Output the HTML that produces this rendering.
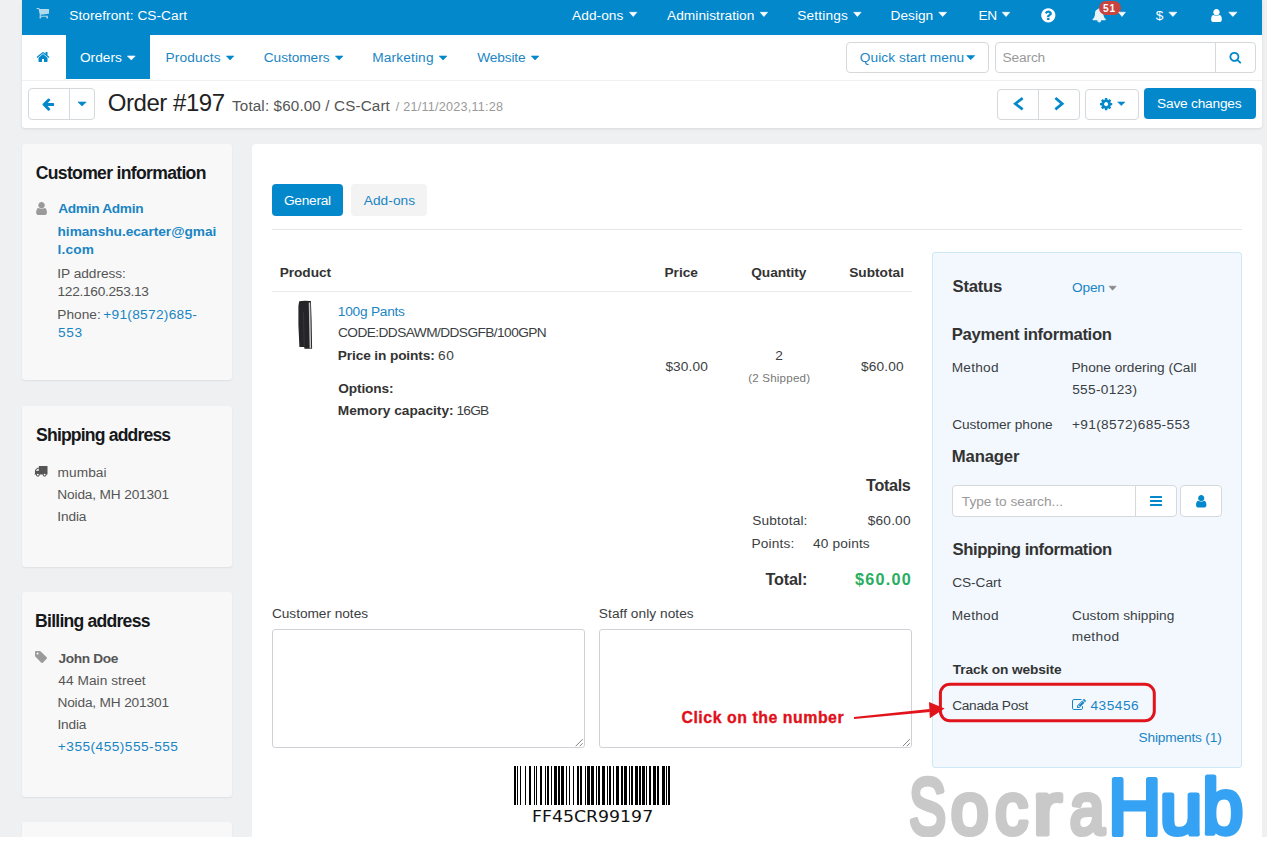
<!DOCTYPE html>
<html lang="en">
<head>
<meta charset="utf-8">
<title>Order #197 - CS-Cart Administration panel</title>
<style>
*{box-sizing:border-box}
html,body{margin:0;padding:0}
body{width:1267px;height:842px;overflow:hidden;background:#eef0f2;position:relative;font-family:'Liberation Sans',sans-serif;font-size:13.7px;color:#3b3e42}
.abs{position:absolute}
.t{position:absolute;white-space:pre;line-height:20px}
svg{position:absolute;overflow:visible}
#header{left:22px;top:0;width:1240px;height:128px;background:#fff;border-radius:0 0 3px 3px;box-shadow:0 1px 3px rgba(0,0,0,.10)}
#top{left:0;top:0;width:1240px;height:35px;background:#0388cc}
#nav{left:0;top:35px;width:1240px;height:46px;border-bottom:1px solid #eef0f1}
#act{left:0;top:81px;width:1240px;height:47px}
.card{background:#f8f8f8;border-radius:3px;box-shadow:0 1px 2px rgba(0,0,0,.07)}
#main{left:252px;top:144px;width:1010px;height:693px;background:#fff;border-radius:4px 4px 0 0}
#rp{left:932px;top:252px;width:310px;height:516px;background:#f2f8fe;border:1px solid #cfe8f5;border-radius:3px}
.btn{position:absolute;background:#fff;border:1px solid #d6d9dc;border-radius:4px}
.caret{position:absolute;width:0;height:0;border-left:4px solid transparent;border-right:4px solid transparent;border-top:4px solid #fff}
#bottomstrip{left:0;top:837px;width:1267px;height:5px;background:#fff}
</style>
</head>
<body>
<div id="header" class="abs">
  <div id="top" class="abs">
    <svg style="left:13.88px;top:6.30px" width="13.54" height="13.54" viewBox="0 0 1792 1792"><path fill="#b0d8ef" d="M704 1536q0 52-38 90t-90 38-90-38-38-90 38-90 90-38 90 38 38 90zm896 0q0 52-38 90t-90 38-90-38-38-90 38-90 90-38 90 38 38 90zm128-1088v512q0 24-16.500 42.500t-40.500 21.500l-1044 122q13 60 13 70 0 16-24 64h920q26 0 45 19t19 45-19 45-45 19h-1024q-26 0-45-19t-19-45q0-11 8-31.500t16-36 21.500-40 15.500-29.500l-177-823h-204q-26 0-45-19t-19-45 19-45 45-19h256q16 0 28.500 6.500t19.500 15.500 13 24.500 8 26 5.500 29.500 4.500 26h1201q26 0 45 19t19 45z"/></svg>
    <svg style="left:0;top:0" width="1" height="1"><polygon points="607.50,12.30 614.90,12.30 611.20,16.60" fill="#fff" stroke="#fff" stroke-width="0.6" stroke-linejoin="round"/></svg>
    <svg style="left:0;top:0" width="1" height="1"><polygon points="738.20,12.30 745.60,12.30 741.90,16.60" fill="#fff" stroke="#fff" stroke-width="0.6" stroke-linejoin="round"/></svg>
    <svg style="left:0;top:0" width="1" height="1"><polygon points="831.70,12.30 839.10,12.30 835.40,16.60" fill="#fff" stroke="#fff" stroke-width="0.6" stroke-linejoin="round"/></svg>
    <svg style="left:0;top:0" width="1" height="1"><polygon points="916.80,12.30 924.60,12.30 920.70,16.60" fill="#fff" stroke="#fff" stroke-width="0.6" stroke-linejoin="round"/></svg>
    <svg style="left:0;top:0" width="1" height="1"><polygon points="980.20,12.30 987.80,12.30 984.00,16.60" fill="#fff" stroke="#fff" stroke-width="0.6" stroke-linejoin="round"/></svg>
    <svg style="left:1018.36px;top:6.96px" width="16.59" height="16.59" viewBox="0 0 1792 1792"><path fill="#fff" d="M1024 1376v-192q0-14-9-23t-23-9h-192q-14 0-23 9t-9 23v192q0 14 9 23t23 9h192q14 0 23-9t9-23zm256-672q0-88-55.500-163t-138.500-116-170-41q-243 0-371 213-15 24 8 42l132 100q7 6 19 6 16 0 25-12 53-68 86-92 34-24 86-24 48 0 85.500 26t37.500 59q0 38-20 61t-68 45q-63 28-115.500 86.500t-52.500 125.500v36q0 14 9 23t23 9h192q14 0 23-9t9-23q0-19 21.500-49.500t54.500-49.500q32-18 49-28.500t46-35 44.500-48 28-60.500 12.500-81zm384 192q0 209-103 385.500t-279.500 279.500-385.500 103-385.500-103-279.500-279.500-103-385.500 103-385.500 279.500-279.500 385.500-103 385.500 103 279.500 279.500 103 385.500z"/></svg>
    <svg style="left:1070.45px;top:8.25px" width="14.39" height="14.39" viewBox="0 0 1792 1792"><path fill="#e6f3fa" d="M912 1696q0-16-16-16-59 0-101.500-42.500t-42.500-101.500q0-16-16-16t-16 16q0 73 51.500 124.500t124.500 51.500q16 0 16-16zm816-288q0 52-38 90t-90 38h-448q0 106-75 181t-181 75-181-75-75-181h-448q-52 0-90-38t-38-90q50-42 91-88t85-119.500 74.500-158.500 50-206 19.500-260q0-152 117-282.500t307-158.500q-8-19-8-39 0-40 28-68t68-28 68 28 28 68q0 20-8 39 190 28 307 158.500t117 282.500q0 139 19.500 260t50 206 74.500 158.500 85 119.500 91 88z"/></svg>
    <span class="abs" style="left:1076.6px;top:0.5px;width:22px;height:14.8px;border-radius:7.4px;background:#c9443f"></span>
    <svg style="left:0;top:0" width="1" height="1"><polygon points="1096.60,12.20 1103.40,12.20 1100.00,16.50" fill="#fff" stroke="#fff" stroke-width="0.6" stroke-linejoin="round"/></svg>
    <svg style="left:0;top:0" width="1" height="1"><polygon points="1146.90,12.20 1154.90,12.20 1150.90,16.50" fill="#fff" stroke="#fff" stroke-width="0.6" stroke-linejoin="round"/></svg>
    <svg style="left:1186.77px;top:7.50px" width="14.96" height="14.96" viewBox="0 0 1792 1792"><path fill="#fff" d="M1536 1399q0 109-62.500 187t-150.500 78h-854q-88 0-150.500-78t-62.500-187q0-85 8.500-160.500t31.500-152 58.500-131 94-89 134.500-34.500q131 128 313 128t313-128q76 0 134.500 34.500t94 89 58.500 131 31.500 152 8.500 160.500zm-256-887q0 159-112.500 271.500t-271.500 112.500-271.500-112.500-112.500-271.500 112.500-271.500 271.500-112.500 271.500 112.500 112.500 271.500z"/></svg>
    <svg style="left:0;top:0" width="1" height="1"><polygon points="1206.80,12.20 1215.00,12.20 1210.90,16.50" fill="#fff" stroke="#fff" stroke-width="0.6" stroke-linejoin="round"/></svg>
    <span class="t" style="left:47.37px;top:6.00px;font-size:13.7px;color:#fff;letter-spacing:0.03px;">Storefront: CS-Cart</span>
    <span class="t" style="left:550.10px;top:6.00px;font-size:13.7px;color:#fff;letter-spacing:0.05px;">Add-ons</span>
    <span class="t" style="left:645.00px;top:6.00px;font-size:13.7px;color:#fff;letter-spacing:0.05px;">Administration</span>
    <span class="t" style="left:775.27px;top:6.00px;font-size:13.7px;color:#fff;letter-spacing:0.16px;">Settings</span>
    <span class="t" style="left:868.53px;top:6.00px;font-size:13.7px;color:#fff;letter-spacing:0.02px;">Design</span>
    <span class="t" style="left:956.53px;top:6.00px;font-size:13.7px;color:#fff;letter-spacing:-0.44px;">EN</span>
    <span class="t" style="left:1133.80px;top:6.00px;font-size:13.7px;color:#fff;">$</span>
    <span class="t" style="left:1080.90px;top:-1.00px;font-size:10.2px;font-weight:700;color:#fff;letter-spacing:0.83px;">51</span>
  </div>
  <div id="nav" class="abs">
    <div class="abs" style="left:44px;top:0;width:84px;height:44px;background:#0388cc"></div>
    <div class="btn" style="left:824px;top:6.5px;width:143px;height:31px"></div>
    <div class="btn" style="left:973px;top:6.5px;width:261px;height:31px"></div>
    <div class="abs" style="left:1193px;top:7px;width:1px;height:30px;background:#d6d9dc"></div>
    <svg style="left:14.44px;top:14.99px" width="14.02" height="14.02" viewBox="0 0 1792 1792"><path fill="#0388cc" d="M1472 992v480q0 26-19 45t-45 19h-384v-384h-256v384h-384q-26 0-45-19t-19-45v-480q0-1 .5-3t.5-3l575-474 575 474q1 2 1 6zm223-69l-62 74q-8 9-21 11h-3q-13 0-21-7l-692-577-692 577q-12 8-24 7-13-2-21-11l-62-74q-8-10-7-23.500t11-21.500l719-599q32-26 76-26t76 26l244 204v-195q0-14 9-23t23-9h192q14 0 23 9t9 23v408l219 182q10 8 11 21.500t-7 23.500z"/></svg>
    <svg style="left:0;top:0" width="1" height="1"><polygon points="105.40,21.00 113.20,21.00 109.30,25.00" fill="#fff" stroke="#fff" stroke-width="0.6" stroke-linejoin="round"/></svg>
    <svg style="left:0;top:0" width="1" height="1"><polygon points="204.40,21.00 211.80,21.00 208.10,25.00" fill="#0388cc" stroke="#0388cc" stroke-width="0.6" stroke-linejoin="round"/></svg>
    <svg style="left:0;top:0" width="1" height="1"><polygon points="313.40,21.00 321.00,21.00 317.20,25.00" fill="#0388cc" stroke="#0388cc" stroke-width="0.6" stroke-linejoin="round"/></svg>
    <svg style="left:0;top:0" width="1" height="1"><polygon points="417.20,21.00 424.90,21.00 421.05,25.00" fill="#0388cc" stroke="#0388cc" stroke-width="0.6" stroke-linejoin="round"/></svg>
    <svg style="left:0;top:0" width="1" height="1"><polygon points="509.30,21.00 516.90,21.00 513.10,25.00" fill="#0388cc" stroke="#0388cc" stroke-width="0.6" stroke-linejoin="round"/></svg>
    <svg style="left:0;top:0" width="1" height="1"><polygon points="944.70,20.60 952.80,20.60 948.75,24.70" fill="#0388cc" stroke="#0388cc" stroke-width="0.6" stroke-linejoin="round"/></svg>
    <svg style="left:1207.36px;top:15.57px" width="12.58" height="12.58" viewBox="0 0 1792 1792"><path fill="#0388cc" d="M1216 832q0-185-131.500-316.500t-316.500-131.500-316.500 131.500-131.500 316.500 131.500 316.500 316.500 131.500 316.500-131.500 131.500-316.500zm512 832q0 52-38 90t-90 38q-54 0-90-38l-343-342q-179 124-399 124-143 0-273.500-55.500t-225-150-150-225-55.500-273.500 55.500-273.500 150-225 225-150 273.500-55.500 273.500 55.500 225 150 150 225 55.500 273.500q0 220-124 399l343 343q37 37 37 90z"/></svg>
    <span class="t" style="left:57.96px;top:13.00px;font-size:13.7px;color:#fff;letter-spacing:0.02px;">Orders</span>
    <span class="t" style="left:143.43px;top:13.00px;font-size:13.7px;color:#1a85c4;letter-spacing:0.18px;">Products</span>
    <span class="t" style="left:241.76px;top:13.00px;font-size:13.7px;color:#1a85c4;letter-spacing:-0.05px;">Customers</span>
    <span class="t" style="left:350.13px;top:13.00px;font-size:13.7px;color:#1a85c4;letter-spacing:0.16px;">Marketing</span>
    <span class="t" style="left:455.30px;top:13.00px;font-size:13.7px;color:#1a85c4;letter-spacing:-0.15px;">Website</span>
    <span class="t" style="left:837.86px;top:13.00px;font-size:13.7px;color:#1a85c4;letter-spacing:0.06px;">Quick start menu</span>
    <span class="t" style="left:980.57px;top:13.00px;font-size:13.7px;color:#999;letter-spacing:-0.14px;">Search</span>
  </div>
  <div id="act" class="abs">
    <div class="btn" style="left:6px;top:7px;width:67px;height:32px"></div>
    <div class="abs" style="left:47px;top:8px;width:1px;height:30px;background:#d6d9dc"></div>
    <div class="btn" style="left:975px;top:7.5px;width:83px;height:31px"></div>
    <div class="abs" style="left:1016px;top:8px;width:1px;height:30px;background:#d6d9dc"></div>
    <div class="btn" style="left:1063px;top:7.5px;width:54px;height:31px"></div>
    <div class="abs" style="left:1122px;top:6.5px;width:112px;height:31.5px;background:#0388cc;border-radius:4px"></div>
    <svg style="left:19.47px;top:15.94px" width="14.11" height="14.11" viewBox="0 0 1792 1792"><path fill="#0388cc" d="M1664 896v128q0 53-32.500 90.500t-84.500 37.500h-704l293 294q38 36 38 90t-38 90l-75 76q-37 37-90 37-52 0-91-37l-651-652q-37-37-37-90 0-52 37-91l651-650q38-38 91-38 52 0 90 38l75 74q38 38 38 91t-38 91l-293 293h704q52 0 84.500 37.500t32.500 90.500z"/></svg>
    <svg style="left:0;top:0" width="1" height="1"><polygon points="56.00,21.00 64.20,21.00 60.10,25.10" fill="#0388cc" stroke="#0388cc" stroke-width="0.6" stroke-linejoin="round"/></svg>
    <svg style="left:0;top:0" width="1" height="1"><polyline points="999.6,17.9 993.3,22.7 999.6,27.5" fill="none" stroke="#0388cc" stroke-width="2.7" stroke-linecap="square" stroke-linejoin="miter"/></svg>
    <svg style="left:0;top:0" width="1" height="1"><polyline points="1034.4,17.9 1040.2,22.7 1034.4,27.5" fill="none" stroke="#0388cc" stroke-width="2.7" stroke-linecap="square" stroke-linejoin="miter"/></svg>
    <svg style="left:1076.78px;top:15.93px" width="14.25" height="14.25" viewBox="0 0 1792 1792"><path fill="#0388cc" d="M1152 896q0-106-75-181t-181-75-181 75-75 181 75 181 181 75 181-75 75-181zm512-109v222q0 12-8 23t-20 13l-185 28q-19 54-39 91 35 50 107 138 10 12 10 25t-9 23q-27 37-99 108t-94 71q-12 0-26-9l-138-108q-44 23-91 38-16 136-29 186-7 28-36 28h-222q-14 0-24.500-8.500t-11.500-21.500l-28-184q-49-16-90-37l-141 107q-10 9-25 9-14 0-25-11-126-114-165-168-7-10-7-23 0-12 8-23 15-21 51-66.500t54-70.500q-27-50-41-99l-183-27q-13-2-21-12.500t-8-23.500v-222q0-12 8-23t19-13l186-28q14-46 39-92-40-57-107-138-10-12-10-24 0-10 9-23 26-36 98.500-107.500t94.500-71.500q13 0 26 10l138 107q44-23 91-38 16-136 29-186 7-28 36-28h222q14 0 24.500 8.500t11.500 21.500l28 184q49 16 90 37l142-107q9-9 24-9 13 0 25 10 129 119 165 170 7 8 7 22 0 12-8 23-15 21-51 66.500t-54 70.500q26 50 41 98l183 28q13 2 21 12.500t8 23.500z"/></svg>
    <svg style="left:0;top:0" width="1" height="1"><polygon points="1095.70,21.00 1102.90,21.00 1099.30,24.60" fill="#0388cc" stroke="#0388cc" stroke-width="0.6" stroke-linejoin="round"/></svg>
    <span class="t" style="left:85.78px;top:12.00px;font-size:24px;color:#222;letter-spacing:-0.46px;">Order #197</span>
    <span class="t" style="left:210.06px;top:15.00px;font-size:15.2px;color:#555;letter-spacing:0.15px;">Total: $60.00 / CS-Cart</span>
    <span class="t" style="left:373.80px;top:16.00px;font-size:12.6px;color:#999;letter-spacing:0.24px;">/ 21/11/2023,11:28</span>
    <span class="t" style="left:1135.07px;top:13.00px;font-size:13.7px;color:#fff;letter-spacing:-0.20px;">Save changes</span>
  </div>
</div>

<div id="c1" class="abs card" style="left:22px;top:144px;width:210px;height:236px">
    <svg style="left:11.60px;top:57.23px" width="15.10" height="15.10" viewBox="0 0 1792 1792"><path fill="#9a9a9a" d="M1536 1399q0 109-62.500 187t-150.500 78h-854q-88 0-150.500-78t-62.500-187q0-85 8.500-160.500t31.500-152 58.500-131 94-89 134.500-34.500q131 128 313 128t313-128q76 0 134.500 34.500t94 89 58.500 131 31.500 152 8.500 160.500zm-256-887q0 159-112.500 271.500t-271.500 112.500-271.500-112.500-112.500-271.500 112.500-271.500 271.500-112.500 271.500 112.500 112.500 271.500z"/></svg>
    <span class="t" style="left:13.75px;top:19.00px;font-size:17.6px;font-weight:700;color:#16181b;letter-spacing:-0.69px;">Customer information</span>
    <span class="t" style="left:36.19px;top:55.00px;font-size:13.7px;font-weight:700;color:#1a85c4;letter-spacing:-0.31px;">Admin Admin</span>
    <span class="t" style="left:35.54px;top:78.00px;font-size:13.7px;font-weight:700;color:#1a85c4;letter-spacing:-0.03px;">himanshu.ecarter@gmai</span>
    <span class="t" style="left:35.54px;top:96.00px;font-size:13.7px;font-weight:700;color:#1a85c4;letter-spacing:0.18px;">l.com</span>
    <span class="t" style="left:35.33px;top:120.00px;font-size:13.7px;color:#555;letter-spacing:-0.04px;">IP address:</span>
    <span class="t" style="left:35.54px;top:138.00px;font-size:13.7px;color:#555;letter-spacing:-0.29px;">122.160.253.13</span>
    <span class="t" style="left:35.33px;top:161.00px;font-size:13.7px;color:#555;">Phone:</span>
    <span class="t" style="left:81.26px;top:161.00px;font-size:13.7px;color:#1a85c4;letter-spacing:0.29px;">+91(8572)685-</span>
    <span class="t" style="left:35.97px;top:179.00px;font-size:13.7px;color:#1a85c4;letter-spacing:0.66px;">553</span>
</div>
<div id="c2" class="abs card" style="left:22px;top:406px;width:210px;height:161px">
    <svg style="left:12.48px;top:58.16px" width="13.52" height="13.52" viewBox="0 0 1792 1792"><path fill="#555" d="M640 1408q0-52-38-90t-90-38-90 38-38 90 38 90 90 38 90-38 38-90zm-384-512h384v-256h-158q-13 0-22 9l-195 195q-9 9-9 22v30zm1280 512q0-52-38-90t-90-38-90 38-38 90 38 90 90 38 90-38 38-90zm256-1088v1024q0 15-4 26.500t-13.500 18.500-16.500 11.500-23.500 6-22.500 2-25.500 0-22.500-.5q0 106-75 181t-181 75-181-75-75-181h-384q0 106-75 181t-181 75-181-75-75-181h-64q-3 0-22.500.5t-25.500 0-22.500-2-23.500-6-16.500-11.500-13.500-18.500-4-26.500q0-26 19-45t45-19v-320q0-8-.5-35t0-38 2.500-34.500 6.500-37 14-30.500 22.500-30l198-198q19-19 50.500-32t58.500-13h160v-192q0-26 19-45t45-19h1024q26 0 45 19t19 45z"/></svg>
    <span class="t" style="left:14.12px;top:19.00px;font-size:17.6px;font-weight:700;color:#16181b;letter-spacing:-0.84px;">Shipping address</span>
    <span class="t" style="left:35.54px;top:57.00px;font-size:13.7px;color:#555;letter-spacing:0.07px;">mumbai</span>
    <span class="t" style="left:35.33px;top:79.00px;font-size:13.7px;color:#555;letter-spacing:-0.16px;">Noida, MH 201301</span>
    <span class="t" style="left:35.33px;top:101.00px;font-size:13.7px;color:#555;letter-spacing:-0.16px;">India</span>
</div>
<div id="c3" class="abs card" style="left:22px;top:592px;width:210px;height:205px">
    <svg style="left:12.03px;top:58.19px" width="14.15" height="14.15" viewBox="0 0 1792 1792"><path fill="#9a9a9a" d="M576 448q0-53-37.500-90.500t-90.500-37.500-90.500 37.500-37.500 90.500 37.500 90.500 90.500 37.500 90.500-37.500 37.500-90.500zm1067 576q0 53-37 90l-491 492q-39 37-91 37-53 0-90-37l-715-716q-38-37-64.500-101t-26.500-117v-416q0-52 38-90t90-38h416q53 0 117 26.500t102 64.500l715 714q37 39 37 91z"/></svg>
    <span class="t" style="left:13.10px;top:19.00px;font-size:17.6px;font-weight:700;color:#16181b;letter-spacing:-0.77px;">Billing address</span>
    <span class="t" style="left:36.50px;top:57.00px;font-size:13.7px;font-weight:700;color:#555;letter-spacing:-0.37px;">John Doe</span>
    <span class="t" style="left:36.29px;top:79.00px;font-size:13.7px;color:#555;letter-spacing:0.05px;">44 Main street</span>
    <span class="t" style="left:35.43px;top:101.00px;font-size:13.7px;color:#555;letter-spacing:-0.17px;">Noida, MH 201301</span>
    <span class="t" style="left:35.43px;top:123.00px;font-size:13.7px;color:#555;letter-spacing:-0.18px;">India</span>
    <span class="t" style="left:35.86px;top:145.00px;font-size:13.7px;color:#1a85c4;letter-spacing:0.47px;">+355(455)555-555</span>
</div>
<div id="c4" class="abs card" style="left:22px;top:822px;width:210px;height:40px"></div>

<div id="main" class="abs">
  <div class="abs" style="left:20px;top:40px;width:71px;height:32px;background:#0388cc;border-radius:4px"></div>
  <div class="abs" style="left:99px;top:40px;width:76px;height:32px;background:#f3f3f3;border-radius:4px"></div>
  <div class="abs" style="left:20px;top:85px;width:970px;height:1px;background:#e3e6e8"></div>
  <div class="abs" style="left:20px;top:147px;width:640px;height:1px;background:#e8eaec"></div>
  <div class="abs" style="left:20px;top:485px;width:313px;height:119px;border:1px solid #cfd3d7;border-radius:3px;background:#fff"></div>
  <div class="abs" style="left:347px;top:485px;width:313px;height:119px;border:1px solid #cfd3d7;border-radius:3px;background:#fff"></div>
    <svg style="left:0;top:0" width="1" height="1"><polygon points="47.2,157.3 52.5,156.8 58.9,156.9 59.6,176.0 60.1,204.8 52.4,204.8 52.3,202.9 47.4,202.9 46.4,181.0 46.4,162.0" fill="#252527"/><path d="M57.5,158.5 C57.8,171.0 57.9,186.0 58.4,204.3" stroke="#c6c6c8" stroke-width="1.5" fill="none"/><path d="M51.5,168.0 L52.2,202.0" stroke="#38383b" stroke-width="0.8" fill="none"/></svg>
    <svg style="left:0;top:0" width="1" height="1" shape-rendering="crispEdges" fill="#000"><rect x="262.0" y="622" width="2" height="39"/><rect x="265.0" y="622" width="1" height="39"/><rect x="268.0" y="622" width="1" height="39"/><rect x="273.0" y="622" width="1" height="39"/><rect x="277.0" y="622" width="2" height="39"/><rect x="282.0" y="622" width="1" height="39"/><rect x="284.0" y="622" width="1" height="39"/><rect x="288.0" y="622" width="2" height="39"/><rect x="293.0" y="622" width="1" height="39"/><rect x="295.0" y="622" width="2" height="39"/><rect x="299.0" y="622" width="1" height="39"/><rect x="302.0" y="622" width="3" height="39"/><rect x="306.0" y="622" width="2" height="39"/><rect x="309.0" y="622" width="3" height="39"/><rect x="314.0" y="622" width="1" height="39"/><rect x="317.0" y="622" width="1" height="39"/><rect x="321.0" y="622" width="1" height="39"/><rect x="325.0" y="622" width="2" height="39"/><rect x="328.0" y="622" width="2" height="39"/><rect x="333.0" y="622" width="1" height="39"/><rect x="335.0" y="622" width="3" height="39"/><rect x="339.0" y="622" width="3" height="39"/><rect x="344.0" y="622" width="1" height="39"/><rect x="346.0" y="622" width="2" height="39"/><rect x="350.0" y="622" width="3" height="39"/><rect x="355.0" y="622" width="1" height="39"/><rect x="357.0" y="622" width="2" height="39"/><rect x="361.0" y="622" width="1" height="39"/><rect x="364.0" y="622" width="3" height="39"/><rect x="369.0" y="622" width="2" height="39"/><rect x="372.0" y="622" width="3" height="39"/><rect x="377.0" y="622" width="1" height="39"/><rect x="379.0" y="622" width="2" height="39"/><rect x="383.0" y="622" width="3" height="39"/><rect x="387.0" y="622" width="2" height="39"/><rect x="390.0" y="622" width="3" height="39"/><rect x="394.0" y="622" width="1" height="39"/><rect x="397.0" y="622" width="2" height="39"/><rect x="401.0" y="622" width="3" height="39"/><rect x="405.0" y="622" width="2" height="39"/><rect x="410.0" y="622" width="3" height="39"/><rect x="414.0" y="622" width="1" height="39"/><rect x="416.0" y="622" width="2" height="39"/></svg>
    <svg style="left:0;top:0" width="1" height="1"><path d="M323.7,602.2 L330.7,595.2 M327.7,602.2 L330.7,599.2" stroke="#666" stroke-width="0.8" fill="none"/></svg>
    <svg style="left:0;top:0" width="1" height="1"><path d="M650.8,602.2 L657.8,595.2 M654.8,602.2 L657.8,599.2" stroke="#666" stroke-width="0.8" fill="none"/></svg>
    <span class="t" style="left:31.96px;top:47.00px;font-size:13.7px;color:#fff;letter-spacing:-0.25px;">General</span>
    <span class="t" style="left:111.70px;top:47.00px;font-size:13.7px;color:#1a85c4;letter-spacing:0.07px;">Add-ons</span>
    <span class="t" style="left:27.74px;top:119.00px;font-size:13.7px;font-weight:700;color:#333;letter-spacing:-0.06px;">Product</span>
    <span class="t" style="left:412.54px;top:119.00px;font-size:13.7px;font-weight:700;color:#333;letter-spacing:-0.05px;">Price</span>
    <span class="t" style="left:499.27px;top:119.00px;font-size:13.7px;font-weight:700;color:#333;letter-spacing:-0.07px;">Quantity</span>
    <span class="t" style="left:597.19px;top:119.00px;font-size:13.7px;font-weight:700;color:#333;">Subtotal</span>
    <span class="t" style="left:85.84px;top:158.00px;font-size:13.7px;color:#1a85c4;letter-spacing:-0.24px;">100g Pants</span>
    <span class="t" style="left:86.06px;top:179.00px;font-size:13.7px;color:#3b3e42;letter-spacing:-0.57px;">CODE:DDSAWM/DDSGFB/100GPN</span>
    <span class="t" style="left:85.84px;top:202.00px;font-size:13.7px;font-weight:700;color:#333;letter-spacing:-0.13px;">Price in points:</span>
    <span class="t" style="left:186.06px;top:202.00px;font-size:13.7px;color:#3b3e42;letter-spacing:0.64px;">60</span>
    <span class="t" style="left:86.27px;top:235.00px;font-size:13.7px;font-weight:700;color:#333;letter-spacing:-0.14px;">Options:</span>
    <span class="t" style="left:85.84px;top:257.00px;font-size:13.7px;font-weight:700;color:#333;letter-spacing:0.01px;">Memory capacity:</span>
    <span class="t" style="left:204.54px;top:257.00px;font-size:13.7px;color:#3b3e42;letter-spacing:-0.77px;">16GB</span>
    <span class="t" style="left:413.40px;top:213.00px;font-size:13.7px;color:#3b3e42;letter-spacing:0.11px;">$30.00</span>
    <span class="t" style="left:523.36px;top:202.00px;font-size:13.7px;color:#3b3e42;">2</span>
    <span class="t" style="left:496.20px;top:224.00px;font-size:11.6px;color:#777;letter-spacing:0.19px;">(2 Shipped)</span>
    <span class="t" style="left:608.90px;top:213.00px;font-size:13.7px;color:#3b3e42;letter-spacing:0.15px;">$60.00</span>
    <span class="t" style="left:614.10px;top:331.00px;font-size:16.2px;font-weight:700;color:#333;letter-spacing:-0.35px;">Totals</span>
    <span class="t" style="left:500.17px;top:367.00px;font-size:13.7px;color:#3b3e42;letter-spacing:0.15px;">Subtotal:</span>
    <span class="t" style="left:615.80px;top:367.00px;font-size:13.7px;color:#3b3e42;letter-spacing:0.17px;">$60.00</span>
    <span class="t" style="left:499.53px;top:390.00px;font-size:13.7px;color:#3b3e42;letter-spacing:0.14px;">Points:</span>
    <span class="t" style="left:561.09px;top:390.00px;font-size:13.7px;color:#3b3e42;letter-spacing:0.13px;">40 points</span>
    <span class="t" style="left:513.40px;top:425.00px;font-size:16.2px;font-weight:700;color:#333;letter-spacing:-0.15px;">Total:</span>
    <span class="t" style="left:603.00px;top:425.00px;font-size:16.2px;font-weight:700;color:#27ae60;letter-spacing:1.26px;">$60.00</span>
    <span class="t" style="left:19.96px;top:460.00px;font-size:13.7px;color:#3b3e42;letter-spacing:-0.04px;">Customer notes</span>
    <span class="t" style="left:346.87px;top:460.00px;font-size:13.7px;color:#3b3e42;letter-spacing:0.05px;">Staff only notes</span>
    <span class="t" style="left:280.38px;top:663.00px;font-size:15.6px;color:#111;font-family:'DejaVu Sans', 'Liberation Sans', sans-serif;transform-origin:0 50%;transform:scaleX(1.1104);">FF45CR99197</span>
    <span class="t" style="left:429.40px;top:564.00px;font-size:15.9px;font-weight:700;color:#e0111a;letter-spacing:0.53px;-webkit-text-stroke:0.35px #e0111a;">Click on the number</span>
</div>

<div id="rp" class="abs">
  <div class="btn" style="left:19px;top:232px;width:225px;height:32px"></div>
  <div class="abs" style="left:202px;top:233px;width:1px;height:30px;background:#d6d9dc"></div>
  <div class="btn" style="left:247px;top:232px;width:42px;height:32px"></div>
    <svg style="left:0;top:0" width="1" height="1"><polygon points="176.00,33.20 183.20,33.20 179.60,37.20" fill="#888" stroke="#888" stroke-width="0.6" stroke-linejoin="round"/></svg>
    <span class="abs" style="left:216.8px;top:243.2px;width:12.4px;height:2px;background:#0388cc;border-radius:.5px"></span>
    <span class="abs" style="left:216.8px;top:247.3px;width:12.4px;height:2px;background:#0388cc;border-radius:.5px"></span>
    <span class="abs" style="left:216.8px;top:251.4px;width:12.4px;height:2px;background:#0388cc;border-radius:.5px"></span>
    <svg style="left:260.88px;top:240.51px" width="14.44" height="14.44" viewBox="0 0 1792 1792"><path fill="#0388cc" d="M1536 1399q0 109-62.500 187t-150.500 78h-854q-88 0-150.500-78t-62.500-187q0-85 8.500-160.500t31.500-152 58.500-131 94-89 134.500-34.500q131 128 313 128t313-128q76 0 134.500 34.500t94 89 58.500 131 31.500 152 8.500 160.500zm-256-887q0 159-112.500 271.500t-271.500 112.500-271.500-112.500-112.500-271.500 112.500-271.500 271.500-112.500 271.500 112.500 112.500 271.500z"/></svg>
    <svg style="left:139.40px;top:445.05px" width="14.00" height="14.00" viewBox="0 0 1792 1792"><path fill="#1a85c4" d="M888 1184l116-116-152-152-116 116v56h96v96h56zm440-720q-16-16-33 1l-350 350q-17 17-1 33t33-1l350-350q17-17 1-33zm80 594v190q0 119-84.500 203.500t-203.500 84.500h-832q-119 0-203.500-84.500t-84.500-203.500v-832q0-119 84.500-203.500t203.500-84.500h832q63 0 117 25 15 7 18 23 3 17-9 29l-49 49q-14 14-32 8-23-6-45-6h-832q-66 0-113 47t-47 113v832q0 66 47 113t113 47h832q66 0 113-47t47-113v-126q0-13 9-22l64-64q15-15 35-7t20 29zm-96-738l288 288-672 672h-288v-288zm444 132l-92 92-288-288 92-92q28-28 68-28t68 28l152 152q28 28 28 68t-28 68z"/></svg>
    <span class="t" style="left:19.5px;top:24.0px;font-size:16.7px;font-weight:700;color:#333;letter-spacing:-0.24px;">Status</span>
    <span class="t" style="left:139.0px;top:25.0px;font-size:13.7px;color:#1a85c4;letter-spacing:-0.17px;">Open</span>
    <span class="t" style="left:18.8px;top:72.0px;font-size:16.7px;font-weight:700;color:#333;letter-spacing:-0.32px;">Payment information</span>
    <span class="t" style="left:18.7px;top:105.0px;font-size:13.7px;color:#3b3e42;letter-spacing:0.25px;">Method</span>
    <span class="t" style="left:138.5px;top:105.0px;font-size:13.7px;color:#3b3e42;letter-spacing:-0.03px;">Phone ordering (Call</span>
    <span class="t" style="left:139.2px;top:127.0px;font-size:13.7px;color:#3b3e42;letter-spacing:0.31px;">555-0123)</span>
    <span class="t" style="left:19.2px;top:162.0px;font-size:13.7px;color:#3b3e42;letter-spacing:-0.06px;">Customer phone</span>
    <span class="t" style="left:139.0px;top:162.0px;font-size:13.7px;color:#3b3e42;letter-spacing:0.33px;">+91(8572)685-553</span>
    <span class="t" style="left:18.8px;top:194.0px;font-size:16.7px;font-weight:700;color:#333;letter-spacing:-0.17px;">Manager</span>
    <span class="t" style="left:28.8px;top:239.0px;font-size:13.7px;color:#999;">Type to search...</span>
    <span class="t" style="left:19.5px;top:287.0px;font-size:16.7px;font-weight:700;color:#333;letter-spacing:-0.43px;">Shipping information</span>
    <span class="t" style="left:19.2px;top:320.0px;font-size:13.7px;color:#3b3e42;letter-spacing:-0.05px;">CS-Cart</span>
    <span class="t" style="left:18.7px;top:353.0px;font-size:13.7px;color:#3b3e42;letter-spacing:0.25px;">Method</span>
    <span class="t" style="left:139.0px;top:353.0px;font-size:13.7px;color:#3b3e42;letter-spacing:0.03px;">Custom shipping</span>
    <span class="t" style="left:138.7px;top:374.0px;font-size:13.7px;color:#3b3e42;letter-spacing:0.33px;">method</span>
    <span class="t" style="left:19.8px;top:407.0px;font-size:13.7px;font-weight:700;color:#333;letter-spacing:-0.10px;">Track on website</span>
    <span class="t" style="left:19.2px;top:443.0px;font-size:13.7px;color:#3b3e42;letter-spacing:-0.30px;">Canada Post</span>
    <span class="t" style="left:157.5px;top:443.0px;font-size:13.7px;color:#1a85c4;letter-spacing:0.51px;">435456</span>
    <span class="t" style="left:205.6px;top:475.0px;font-size:13.7px;color:#1a85c4;letter-spacing:-0.17px;">Shipments (1)</span>
</div>

<div id="overlay" class="abs" style="left:0;top:0;width:1267px;height:842px;pointer-events:none">
<svg style="left:0;top:0" width="1267" height="842"><rect x="940.4" y="684.2" width="213.9" height="36.6" rx="9.5" ry="9.5" fill="none" stroke="#e1131b" stroke-width="3"/><polygon points="853.9,716.9 929.6,709.0 929.9,711.9 854.1,718.9" fill="#e1131b"/><polygon points="944.6,708.5 929.0,702.1 929.8,718.3" fill="#e1131b"/></svg>
<svg style="left:0;top:0" width="1267" height="842" font-family="'Liberation Sans', sans-serif" font-weight="400" font-size="79" stroke-width="5.2" stroke-linejoin="round"><text y="833.70" vector-effect="non-scaling-stroke"><tspan x="909.06" font-size="80.58" textLength="37.18" lengthAdjust="spacingAndGlyphs" fill="#c9c9c9" stroke="#c9c9c9">S</tspan><tspan x="950.66" font-size="74.26" textLength="38.00" lengthAdjust="spacingAndGlyphs" fill="#c9c9c9" stroke="#c9c9c9">o</tspan><tspan x="995.03" font-size="74.26" textLength="33.10" lengthAdjust="spacingAndGlyphs" fill="#c9c9c9" stroke="#c9c9c9">c</tspan><tspan x="1032.91" font-size="74.26" textLength="28.71" lengthAdjust="spacingAndGlyphs" fill="#c9c9c9" stroke="#c9c9c9">r</tspan><tspan x="1069.65" font-size="74.26" textLength="34.76" lengthAdjust="spacingAndGlyphs" fill="#c9c9c9" stroke="#c9c9c9">a</tspan><tspan x="1108.36" font-size="79.00" textLength="53.02" lengthAdjust="spacingAndGlyphs" fill="#35a2f4" stroke="#35a2f4">H</tspan><tspan x="1159.96" font-size="74.26" textLength="42.20" lengthAdjust="spacingAndGlyphs" fill="#35a2f4" stroke="#35a2f4">u</tspan><tspan x="1202.62" font-size="77.02" textLength="40.75" lengthAdjust="spacingAndGlyphs" fill="#35a2f4" stroke="#35a2f4">b</tspan></text></svg>
</div>
<div id="bottomstrip" class="abs"></div>
</body>
</html>
